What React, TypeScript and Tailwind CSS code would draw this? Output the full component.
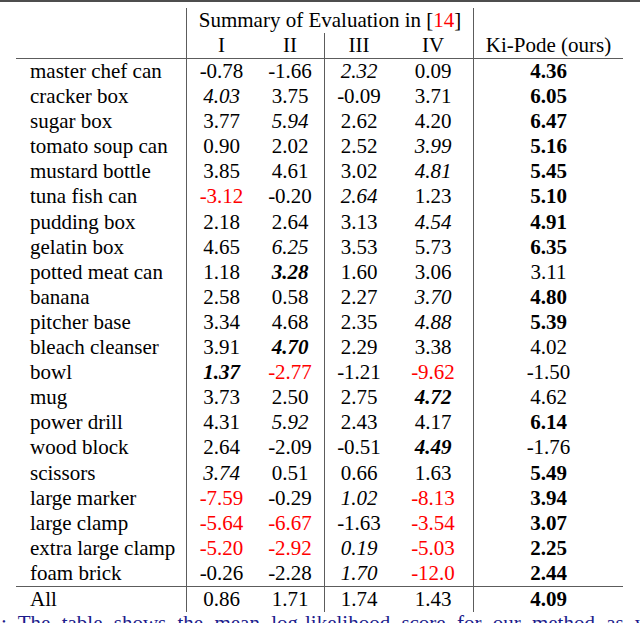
import React from 'react';

// cell codes: plain value, "i:" italic, "bi:" bold italic, "b:" bold, "r:" red
const rows: [string, string[]][] = [
  ['master chef can', ['-0.78', '-1.66', 'i:2.32', '0.09', 'b:4.36']],
  ['cracker box', ['i:4.03', '3.75', '-0.09', '3.71', 'b:6.05']],
  ['sugar box', ['3.77', 'i:5.94', '2.62', '4.20', 'b:6.47']],
  ['tomato soup can', ['0.90', '2.02', '2.52', 'i:3.99', 'b:5.16']],
  ['mustard bottle', ['3.85', '4.61', '3.02', 'i:4.81', 'b:5.45']],
  ['tuna fish can', ['r:-3.12', '-0.20', 'i:2.64', '1.23', 'b:5.10']],
  ['pudding box', ['2.18', '2.64', '3.13', 'i:4.54', 'b:4.91']],
  ['gelatin box', ['4.65', 'i:6.25', '3.53', '5.73', 'b:6.35']],
  ['potted meat can', ['1.18', 'bi:3.28', '1.60', '3.06', '3.11']],
  ['banana', ['2.58', '0.58', '2.27', 'i:3.70', 'b:4.80']],
  ['pitcher base', ['3.34', '4.68', '2.35', 'i:4.88', 'b:5.39']],
  ['bleach cleanser', ['3.91', 'bi:4.70', '2.29', '3.38', '4.02']],
  ['bowl', ['bi:1.37', 'r:-2.77', '-1.21', 'r:-9.62', '-1.50']],
  ['mug', ['3.73', '2.50', '2.75', 'bi:4.72', '4.62']],
  ['power drill', ['4.31', 'i:5.92', '2.43', '4.17', 'b:6.14']],
  ['wood block', ['2.64', '-2.09', '-0.51', 'bi:4.49', '-1.76']],
  ['scissors', ['i:3.74', '0.51', '0.66', '1.63', 'b:5.49']],
  ['large marker', ['r:-7.59', '-0.29', 'i:1.02', 'r:-8.13', 'b:3.94']],
  ['large clamp', ['r:-5.64', 'r:-6.67', '-1.63', 'r:-3.54', 'b:3.07']],
  ['extra large clamp', ['r:-5.20', 'r:-2.92', 'i:0.19', 'r:-5.03', 'b:2.25']],
  ['foam brick', ['-0.26', '-2.28', 'i:1.70', 'r:-12.0', 'b:2.44']],
];

const allRow = ['0.86', '1.71', '1.74', '1.43', 'b:4.09'];

const cols = 'grid grid-cols-[170px_70px_68px_69px_80px_150px]';
const line = 'border-[#5c5c5c]';
// left borders for columns I, III and Ki-Pode
const cellBorder = ['border-l', '', 'border-l', '', 'border-l'];

function Value({ code }: { code: string }) {
  const [tag, text] = code.includes(':') ? code.split(':') : ['', code];
  const cls =
    tag === 'i' ? 'italic' :
    tag === 'bi' ? 'italic font-bold' :
    tag === 'b' ? 'font-bold' :
    tag === 'r' ? 'text-[#ff0000]' : '';
  return <span className={cls}>{text}</span>;
}

function Row({ label, values, className = '' }: { label: string; values: string[]; className?: string }) {
  return (
    <div className={`${cols} h-[25.1px] leading-[25px] ${className}`}>
      <div className="pl-[14px] whitespace-nowrap">{label}</div>
      {values.map((v, i) => (
        <div key={i} className={`text-center ${cellBorder[i]} ${line}`}>
          <Value code={v} />
        </div>
      ))}
    </div>
  );
}

export default function App() {
  return (
    <div className="w-[640px] h-[623px] overflow-hidden bg-white text-black font-['Liberation_Serif',serif] text-[21px]">
      <div className="h-[2px] bg-[#4d4d4d]" />
      <div className="ml-[16px] w-[607px] pt-[6px]">
        <div className={`${cols} h-[25px] leading-[25px]`}>
          <div />
          <div className={`col-span-4 text-center border-l ${line}`}>
            Summary of Evaluation in [<span className="text-[#ff0000]">14</span>]
          </div>
          <div className={`border-l ${line}`} />
        </div>
        <div className={`${cols} h-[26px] leading-[25px] border-b ${line}`}>
          <div />
          <div className={`text-center border-l ${line}`}>I</div>
          <div className="text-center">II</div>
          <div className={`text-center border-l ${line}`}>III</div>
          <div className="text-center">IV</div>
          <div className={`text-center border-l ${line}`}>Ki-Pode (ours)</div>
        </div>
        {rows.map(([label, values]) => (
          <Row key={label} label={label} values={values} />
        ))}
        <Row label="All" values={allRow} className={`border-t ${line} h-[26px]`} />
      </div>
      <p className="mt-[1px] leading-none whitespace-nowrap text-[#1c1c8c] -ml-[67px] [word-spacing:6px]">
        Table 1: The table shows the mean log-likelihood score for our method as well
      </p>
    </div>
  );
}
